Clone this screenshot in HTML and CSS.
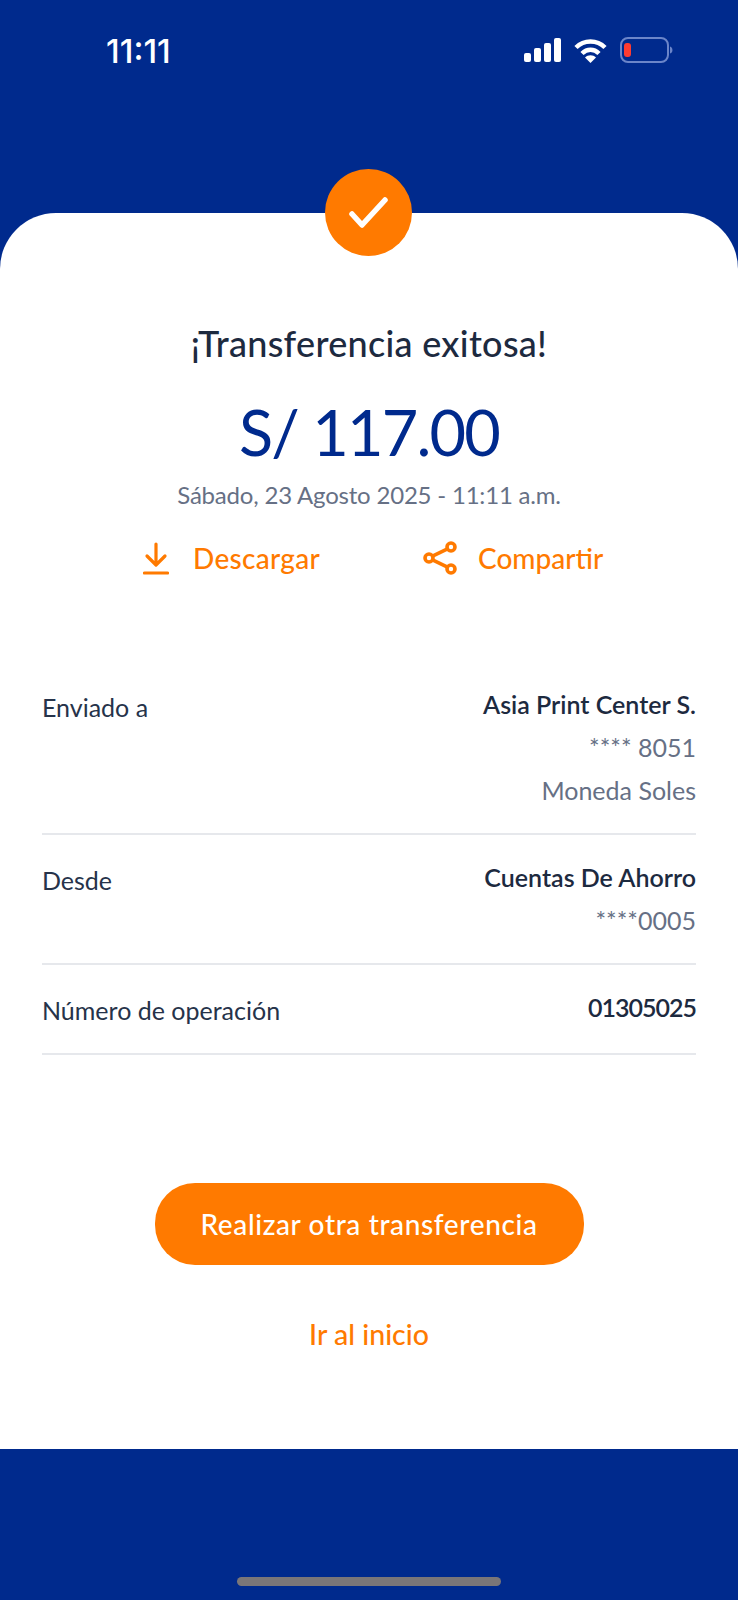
FILE: index.html
```html
<!DOCTYPE html>
<html lang="es">
<head>
    <meta charset="UTF-8" />
    <title>Transferencia exitosa</title>
    <link rel="stylesheet" href="styles.css">
</head>
<body>
    <div class="status">
        <span class="time">11:11</span>
        <div class="status-icons">
            <svg width="37" height="24" viewBox="0 0 37 24" fill="#fff">
                <rect x="0" y="15" width="7" height="9" rx="2" />
                <rect x="10" y="10" width="7" height="14" rx="2" />
                <rect x="20" y="5" width="7" height="19" rx="2" />
                <rect x="30" y="0" width="7" height="24" rx="2" />
            </svg>
            <svg width="33" height="25" viewBox="0 0 33 25" fill="none" stroke="#fff" stroke-width="4.5">
                <path d="M2 9.5C10 1.5 23 1.5 31 9.5" />
                <path d="M8 15.5C13 10.5 20 10.5 25 15.5" />
                <path d="M16.5 25L11 19.5C14 16.5 19 16.5 22 19.5Z" fill="#fff" stroke="none" />
            </svg>
            <svg width="54" height="26" viewBox="0 0 54 26" fill="none">
                <rect x="1" y="1" width="47" height="24" rx="7" stroke="#6b85c9" stroke-width="2" />
                <rect x="4" y="6" width="7" height="14" rx="3" fill="#ff3b30" />
                <path d="M50 9.5C53 10 53.500 16 50 16.500Z" fill="#6b85c9" />
            </svg>
        </div>
    </div>

    <main class="card">
        <div class="badge">
            <svg width="40" height="32" viewBox="0 0 40 32" fill="none" stroke="#fff" stroke-width="5.500" stroke-linecap="round" stroke-linejoin="round">
                <path d="M3 17L13 28L36 3" />
            </svg>
        </div>

        <h1 class="title">¡Transferencia exitosa!</h1>
        <p class="amount">S/ 117.00</p>
        <p class="date">Sábado, 23 Agosto 2025 - 11:11 a.m.</p>

        <div class="actions">
            <a class="action">
                <svg width="26" height="33" viewBox="0 0 26 33" fill="none" stroke="#ff7a00" stroke-width="3.200" stroke-linecap="round" stroke-linejoin="round">
                    <path d="M13 2V22M4 14L13 23L22 14" />
                    <path d="M1.500 31H24.500" />
                </svg>
                Descargar
            </a>
            <a class="action action-share">
                <svg width="34" height="34" viewBox="0 0 34 34" fill="none" stroke="#ff7a00" stroke-width="3.600">
                    <circle cx="6" cy="17" r="4" />
                    <circle cx="28" cy="6" r="4" />
                    <circle cx="28" cy="28" r="4" />
                    <path d="M9.500 15.200L24.500 7.800M9.500 18.800L24.500 26.200" />
                </svg>
                Compartir
            </a>
        </div>

        <section class="details">
            <div class="row row-first">
                <span class="label">Enviado a</span>
                <div class="values">
                    <strong>Asia Print Center S.</strong>
                    <span>**** 8051</span>
                    <span>Moneda Soles</span>
                </div>
            </div>
            <div class="row">
                <span class="label">Desde</span>
                <div class="values">
                    <strong>Cuentas De Ahorro</strong>
                    <span>****0005</span>
                </div>
            </div>
            <div class="row">
                <span class="label">Número de operación</span>
                <div class="values">
                    <strong class="number">01305025</strong>
                </div>
            </div>
        </section>

        <button class="primary">Realizar otra transferencia</button>
        <a class="home-link">Ir al inicio</a>
    </main>

    <div class="footer">
        <div class="home-bar"></div>
    </div>
</body>
</html>
```

FILE: styles.css
```css
* {
    box-sizing: border-box;
}

body {
    margin: 0;
    width: 738px;
    height: 1600px;
    overflow: hidden;
    background-color: #002a8d;
    font-family: 'Lato', 'Noto Sans', sans-serif;
}

.status {
    height: 213px;
    padding: 37px 64px 0 106px;
    display: flex;
    justify-content: space-between;
    align-items: flex-start;
}

.time {
    color: #fff;
    font-family: 'Inter', sans-serif;
    font-size: 33px;
    font-weight: 500;
    line-height: 28px;
}

.status-icons {
    display: flex;
    align-items: center;
    gap: 13px;
}

.card {
    position: relative;
    height: 1236px;
    padding: 0 42px;
    background-color: #fff;
    border-radius: 56px 56px 0 0;
    display: flex;
    flex-direction: column;
    align-items: center;
}

.badge {
    position: absolute;
    top: -44px;
    left: 325px;
    width: 87px;
    height: 87px;
    border-radius: 50%;
    background-color: #ff7a00;
    display: flex;
    align-items: center;
    justify-content: center;
}

.title {
    margin: 106px 0 0;
    color: #1d2a3f;
    font-size: 36px;
    font-weight: 500;
    line-height: 48px;
    letter-spacing: 0.3px;
}

.amount {
    margin: 23px 0 0;
    color: #002a8d;
    font-size: 63px;
    font-weight: 400;
    line-height: 84px;
    letter-spacing: -1.8px;
}

.date {
    margin: 5px 0 0;
    color: #667085;
    font-size: 24px;
    line-height: 32px;
    letter-spacing: -0.2px;
}

.actions {
    margin-top: 30px;
    width: 100%;
    padding-left: 101px;
    display: flex;
    gap: 103px;
}

.action {
    display: flex;
    align-items: center;
    gap: 24px;
    color: #ff7a00;
    font-size: 28px;
    font-weight: 500;
    letter-spacing: 0.3px;
}

.action-share {
    gap: 21px;
    letter-spacing: 0;
}

.details {
    margin-top: 113px;
    width: 100%;
}

.row {
    display: flex;
    justify-content: space-between;
    align-items: flex-start;
    padding: 26px 0 27px;
    border-bottom: 2px solid #e6e8ec;
}

.row-first {
    padding-top: 0;
    padding-bottom: 27px;
}

.label {
    margin-top: 3px;
    color: #26334a;
    font-size: 25px;
    line-height: 32px;
}

.values {
    display: flex;
    flex-direction: column;
    align-items: flex-end;
    gap: 11px;
    color: #667085;
    font-size: 25px;
    line-height: 32px;
}

.values strong {
    color: #1d2a3f;
    font-weight: 600;
}

.values .number {
    letter-spacing: -1px;
}

.primary {
    margin-top: 128px;
    width: 429px;
    height: 82px;
    border: none;
    border-radius: 40px;
    background-color: #ff7a00;
    color: #fff;
    font-family: inherit;
    font-size: 28px;
    font-weight: 500;
    letter-spacing: 0.63px;
}

.home-link {
    margin-top: 50px;
    color: #ff7a00;
    font-size: 28.500px;
    font-weight: 500;
    line-height: 38px;
}

.footer {
    height: 151px;
    padding-top: 128px;
    display: flex;
    justify-content: center;
}

.home-bar {
    width: 264px;
    height: 9px;
    border-radius: 5px;
    background-color: #7a7678;
}
```
